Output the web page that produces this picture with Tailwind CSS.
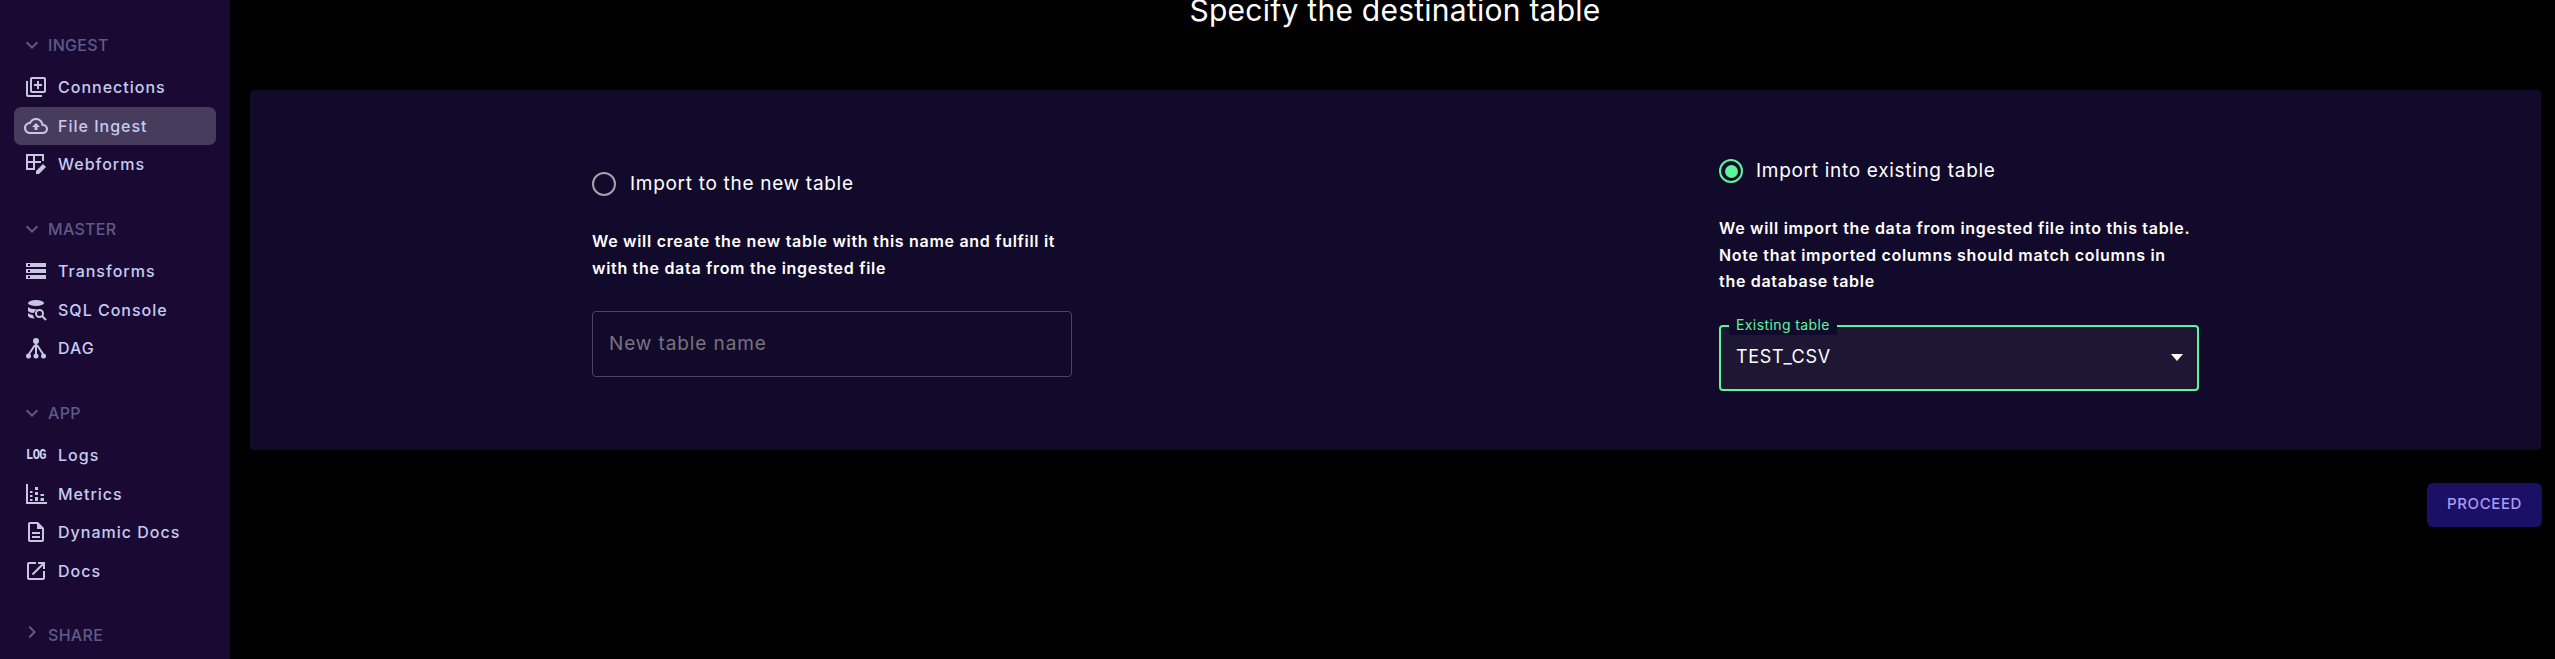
<!DOCTYPE html>
<html lang="en">
<head>
    <meta charset="UTF-8">
    <meta name="viewport" content="width=device-width, initial-scale=1.0">
    <title>File Ingest</title>
    <script src="https://cdn.jsdelivr.net/npm/@tailwindcss/browser@4"></script>
</head>
<body class="h-[659px] overflow-hidden bg-black font-['Inter',sans-serif] text-white">
    <div class="flex h-[659px]">
        <!-- sidebar -->
        <aside class="w-[230px] shrink-0 overflow-hidden bg-[#1a0a33] pt-[33px] text-[16px] font-medium tracking-[1px] text-[#c6cbf2]">
            <div class="flex h-[24px] items-center pl-[20px] text-[16px] tracking-[0.3px] text-[#5f5b88]">
                <svg class="mr-[4px] h-[24px] w-[24px] fill-current" viewBox="0 0 24 24"><path d="M16.59 8.59L12 13.17 7.41 8.59 6 10l6 6 6-6z"/></svg>
                <span>INGEST</span>
            </div>
            <nav class="mt-[11px] flex flex-col gap-[0.5px] px-[14px]">
                <a class="flex h-[38px] items-center gap-[10px] rounded-[7px] pl-[10px]">
                    <svg class="h-[24px] w-[24px] fill-[#c9c6e4]" viewBox="0 0 24 24"><path d="M4 6H2v14c0 1.1.9 2 2 2h14v-2H4V6zm16-4H8c-1.1 0-2 .9-2 2v12c0 1.1.9 2 2 2h12c1.1 0 2-.9 2-2V4c0-1.1-.9-2-2-2zm0 14H8V4h12v12zm-7-2h2v-3h3V9h-3V6h-2v3h-3v2h3z"/></svg>
                    <span>Connections</span>
                </a>
                <a class="flex h-[38px] items-center gap-[10px] rounded-[7px] bg-[#483c5c] pl-[10px]">
                    <svg class="h-[24px] w-[24px] fill-[#c9c6e4]" viewBox="0 0 24 24"><path d="M19.35 10.04C18.67 6.59 15.64 4 12 4 9.11 4 6.6 5.64 5.35 8.04 2.34 8.36 0 10.91 0 14c0 3.31 2.69 6 6 6h13c2.76 0 5-2.24 5-5 0-2.64-2.05-4.78-4.65-4.96zM19 18H6c-2.21 0-4-1.79-4-4 0-2.05 1.53-3.76 3.56-3.97l1.07-.11.5-.95C8.08 7.14 9.94 6 12 6c2.62 0 4.88 1.86 5.39 4.43l.3 1.5 1.53.11c1.56.1 2.78 1.41 2.78 2.96 0 1.65-1.35 3-3 3zM8 13h2.55v3h2.9v-3H16l-4-4z"/></svg>
                    <span>File Ingest</span>
                </a>
                <a class="flex h-[38px] items-center gap-[10px] rounded-[7px] pl-[10px]">
                    <svg class="h-[24px] w-[24px]" viewBox="0 0 24 24"><path fill="none" stroke="#c9c6e4" stroke-width="2" d="M11 17H3V3h16v6M3 10h14M10 3v14"/><path fill="#c9c6e4" d="M12 22v-3l7-7 3 3-7 7z"/></svg>
                    <span>Webforms</span>
                </a>
            </nav>

            <div class="mt-[34px] flex h-[24px] items-center pl-[20px] text-[16px] tracking-[0.3px] text-[#5f5b88]">
                <svg class="mr-[4px] h-[24px] w-[24px] fill-current" viewBox="0 0 24 24"><path d="M16.59 8.59L12 13.17 7.41 8.59 6 10l6 6 6-6z"/></svg>
                <span>MASTER</span>
            </div>
            <nav class="mt-[11px] flex flex-col gap-[0.5px] px-[14px]">
                <a class="flex h-[38px] items-center gap-[10px] rounded-[7px] pl-[10px]">
                    <svg class="h-[24px] w-[24px] fill-[#c9c6e4]" viewBox="0 0 24 24"><path d="M2 20h20v-4H2v4zm2-3h2v2H4v-2zM2 4v4h20V4H2zm4 3H4V5h2v2zm-4 7h20v-4H2v4zm2-3h2v2H4v-2z"/></svg>
                    <span>Transforms</span>
                </a>
                <a class="flex h-[38px] items-center gap-[10px] rounded-[7px] pl-[10px]">
                    <svg class="h-[24px] w-[24px]" viewBox="0 0 24 24"><ellipse cx="12" cy="5" rx="8" ry="3" fill="#c9c6e4"/><path fill="#c9c6e4" d="M4 9c2 2 7 2.500 10 2-2.500 1-3.500 2-4 4-3 0-5-1-6-2zM4 15c1 1 3 1.800 5 2 .2 1.500.8 2.500 2 3.500-4 .2-6-1-7-2.500z"/><circle cx="15.500" cy="15.500" r="3.500" fill="none" stroke="#c9c6e4" stroke-width="2"/><path stroke="#c9c6e4" stroke-width="2" d="M18 18l4 4"/></svg>
                    <span>SQL Console</span>
                </a>
                <a class="flex h-[38px] items-center gap-[10px] rounded-[7px] pl-[10px]">
                    <svg class="h-[24px] w-[24px]" viewBox="0 0 24 24"><g fill="#c9c6e4"><circle cx="12" cy="5" r="3"/><circle cx="4.500" cy="20" r="2.500"/><circle cx="12" cy="20" r="2.500"/><circle cx="19.500" cy="20" r="2.500"/></g><path fill="none" stroke="#c9c6e4" stroke-width="2" d="M12 7v11M11 9l-6 9M13 9l6 9"/></svg>
                    <span>DAG</span>
                </a>
            </nav>

            <div class="mt-[34px] flex h-[24px] items-center pl-[20px] text-[16px] tracking-[0.3px] text-[#5f5b88]">
                <svg class="mr-[4px] h-[24px] w-[24px] fill-current" viewBox="0 0 24 24"><path d="M16.59 8.59L12 13.17 7.41 8.59 6 10l6 6 6-6z"/></svg>
                <span>APP</span>
            </div>
            <nav class="mt-[11px] flex flex-col gap-[0.5px] px-[14px]">
                <a class="flex h-[38px] items-center gap-[10px] rounded-[7px] pl-[10px]">
                    <span class="w-[24px] scale-y-125 text-center font-['Liberation_Mono',monospace] text-[12px] font-bold tracking-[-0.5px] text-[#d6d3ee]">LOG</span>
                    <span>Logs</span>
                </a>
                <a class="flex h-[38px] items-center gap-[10px] rounded-[7px] pl-[10px]">
                    <svg class="h-[24px] w-[24px]" viewBox="0 0 24 24"><path fill="none" stroke="#c9c6e4" stroke-width="2" d="M3 2v19h20"/><path fill="#c9c6e4" d="M6 9h2.500v2H6zM6 13h2.500v2H6zM6 17h2.500v2H6zM11 5h3v3h-3zM11 10h3v3h-3zM11 15h3v4h-3zM16.500 12H20v2h-3.500zM16.500 16H20v3h-3.500z"/></svg>
                    <span>Metrics</span>
                </a>
                <a class="flex h-[38px] items-center gap-[10px] rounded-[7px] pl-[10px]">
                    <svg class="h-[24px] w-[24px] fill-[#c9c6e4]" viewBox="0 0 24 24"><path d="M8 16h8v2H8zm0-4h8v2H8zm6-10H6c-1.100 0-2 .9-2 2v16c0 1.100.89 2 1.990 2H18c1.100 0 2-.9 2-2V8l-6-6zm4 18H6V4h7v5h5v11z"/></svg>
                    <span>Dynamic Docs</span>
                </a>
                <a class="flex h-[38px] items-center gap-[10px] rounded-[7px] pl-[10px]">
                    <svg class="h-[24px] w-[24px] fill-[#c9c6e4]" viewBox="0 0 24 24"><path d="M19 19H5V5h7V3H5c-1.110 0-2 .9-2 2v14c0 1.100.89 2 2 2h14c1.100 0 2-.9 2-2v-7h-2v7zM14 3v2h3.590l-9.830 9.830 1.410 1.410L19 6.410V10h2V3h-7z"/></svg>
                    <span>Docs</span>
                </a>
            </nav>

            <div class="mt-[33px] flex h-[24px] items-center pl-[20px] text-[16px] tracking-[0.3px] text-[#5f5b88]">
                <svg class="mr-[4px] -mt-[6px] h-[24px] w-[24px] fill-current" viewBox="0 0 24 24"><path d="M10 6L8.590 7.410 13.170 12l-4.580 4.590L10 18l6-6z"/></svg>
                <span>SHARE</span>
            </div>
        </aside>

        <!-- main -->
        <main class="min-w-0 flex-1 pl-[20px] pr-[14px]">
            <h1 class="h-[90px] pr-[1px] text-center text-[30px] leading-[20px] tracking-[0.25px]">Specify the destination table</h1>

            <section class="flex h-[360px] items-start justify-between rounded-[4px] bg-[#120a2a] px-[342px]">
                <div class="mt-[78px] w-[480px]">
                    <label class="flex h-[32px] items-center gap-[14px] text-[19px] tracking-[0.7px]">
                        <span class="h-[24px] w-[24px] rounded-full border-[2.5px] border-[#a5a2ae]"></span>
                        <span>Import to the new table</span>
                    </label>
                    <p class="mt-[28px] text-[16px] leading-[27px] font-semibold tracking-[0.7px]">We will create the new table with this name and fulfill it<br>with the data from the ingested file</p>
                    <div class="mt-[29px] flex h-[66px] items-center rounded-[4px] border border-[#4b4660] px-[16px] text-[19px] tracking-[0.9px] text-[#77737f]">New table name</div>
                </div>

                <div class="mt-[65px] w-[480px]">
                    <label class="flex h-[32px] items-center gap-[13px] text-[19px] tracking-[0.7px]">
                        <span class="flex h-[24px] w-[24px] items-center justify-center rounded-full border-[2.5px] border-[#5ef59a]">
                            <span class="h-[13px] w-[13px] rounded-full bg-[#5ef59a]"></span>
                        </span>
                        <span>Import into existing table</span>
                    </label>
                    <p class="mt-[28px] text-[16px] leading-[26.500px] font-semibold tracking-[0.7px]">We will import the data from ingested file into this table.<br>Note that imported columns should match columns in<br>the database table</p>
                    <div class="relative mt-[30px] flex h-[66px] items-center rounded-[4px] border-2 border-[#5ef59a] bg-[#1e1733] px-[15px] pb-[2px] text-[18px] tracking-[0.7px]">
                        <span class="absolute -top-[12px] left-[8px] bg-[#120a2a] px-[7px] text-[14px] leading-[20px] tracking-[0.4px] text-[#5ef59a]">Existing table</span>
                        <span>TEST_CSV</span>
                        <svg class="absolute right-[13px] top-[25px] h-[12px] w-[14px]" viewBox="0 0 14 12"><path fill="#fff" d="M1 2h12L7 9z"/></svg>
                    </div>
                </div>
            </section>

            <div class="mt-[33px] flex justify-end">
                <button class="-mr-[1px] h-[44px] w-[115px] rounded-[6px] bg-[#1c0f66] pb-[2px] text-[15px] font-medium tracking-[0.6px] text-[#a79bf5]">PROCEED</button>
            </div>
        </main>
    </div>
</body>
</html>
